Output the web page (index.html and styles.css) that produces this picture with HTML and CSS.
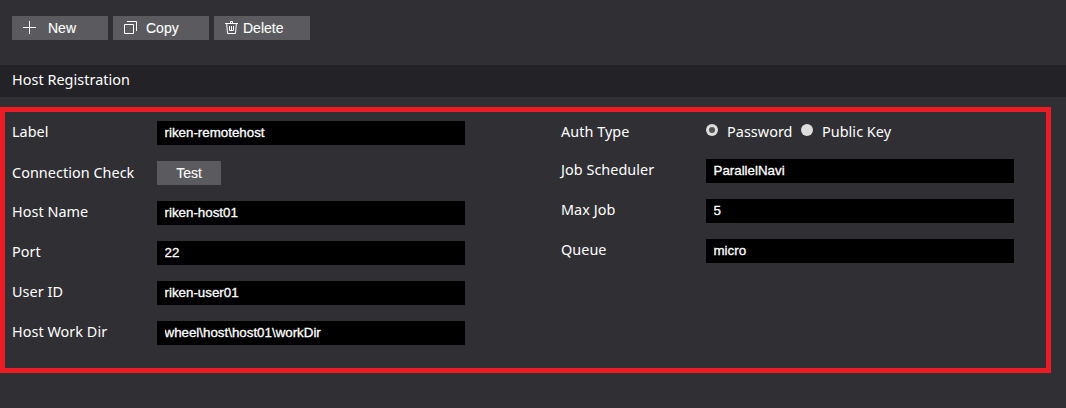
FILE: index.html
```html
<!DOCTYPE html>
<html lang="en">
<head>
<meta charset="utf-8">
<title>Host Registration</title>
<link rel="stylesheet" href="styles.css">
</head>
<body>
<nav class="toolbar">
  <button class="btn"><svg class="icon" viewBox="0 0 16 16"><path d="M7.500 1v13M1 7.500h13"/></svg><span class="btn-new">New</span></button>
  <button class="btn"><svg class="icon" viewBox="0 0 16 16"><path d="M1.500 4.500h9v9h-9zM4 1.500h9.500V11"/></svg><span class="btn-copy">Copy</span></button>
  <button class="btn"><svg class="icon" viewBox="0 0 16 16"><path d="M1 3.500h13M6.500 3V1.500h2V3M2.700 4l.8 9.500h8l.8-9.500M5.500 6v4.500h4V6M7.500 6v4"/></svg><span class="btn-delete">Delete</span></button>
</nav>
<h1 class="title">Host Registration</h1>
<form class="panel">
  <div class="column">
    <div class="row"><label>Label</label><input type="text" value="riken-remotehost"></div>
    <div class="row row-test"><label>Connection Check</label><button type="button" class="btn test">Test</button></div>
    <div class="row"><label>Host Name</label><input type="text" value="riken-host01"></div>
    <div class="row"><label>Port</label><input type="text" value="22"></div>
    <div class="row"><label>User ID</label><input type="text" value="riken-user01"></div>
    <div class="row"><label>Host Work Dir</label><input type="text" value="wheel\host\host01\workDir"></div>
  </div>
  <div class="column right">
    <div class="row auth"><label>Auth Type</label>
      <span class="radio checked"></span><span class="option password">Password</span>
      <span class="radio"></span><span class="option">Public Key</span></div>
    <div class="row"><label>Job Scheduler</label><input type="text" value="ParallelNavi"></div>
    <div class="row"><label>Max Job</label><input type="text" value="5"></div>
    <div class="row"><label>Queue</label><input type="text" value="micro"></div>
  </div>
</form>
</body>
</html>
```
FILE: styles.css
```css
* { box-sizing: border-box; }
body {
  margin: 0;
  height: 408px;
  overflow: hidden;
  background: #302f34;
  color: #fff;
  font: 14.4px/24px "Noto Sans", sans-serif;
  letter-spacing: 0.05px;
}
.toolbar { display: flex; gap: 5px; padding: 16px 12px 25px; }
.btn {
  display: flex;
  align-items: center;
  width: 96px;
  height: 24px;
  padding: 0 10px;
  border: 0;
  background: #5b5a5f;
  color: #fff;
  font: 14px/24px "Liberation Sans", Arial, sans-serif;
  -webkit-text-stroke: 0.1px #fff;
}
.icon { width: 16px; height: 16px; flex: none; fill: none; stroke: #fff; stroke-width: 1; }
.btn-new { margin-left: 10px; }
.btn-copy { margin-left: 7px; }
.btn-delete { margin-left: 3px; }
.title {
  margin: 0 0 10px;
  height: 32px;
  padding-left: 12px;
  background: #232227;
  font-size: 14.4px;
  font-weight: 400;
  line-height: 30px;
}
.panel {
  display: flex;
  width: 1051px;
  height: 266px;
  padding: 9px 0 0 7px;
  border: 5px solid #ed1c24;
}
.column { display: flex; flex-direction: column; gap: 16px; width: 549px; }
.right { width: 460px; }
.row { display: flex; height: 24px; }
.row label { width: 145px; line-height: 22px; }
.row-test label { line-height: 24px; }
.row input {
  width: 308px;
  height: 24px;
  padding: 0 8px 1px 7.5px;
  border: 0;
  background: #000;
  color: #fff;
  font: 13.333px "Liberation Sans", Arial, sans-serif;
  -webkit-text-stroke: 0.3px #fff;
}
.test { width: 64px; justify-content: center; }
.auth { height: 22px; }
.radio {
  display: flex;
  align-items: center;
  justify-content: center;
  width: 12px;
  height: 12px;
  margin-top: 3px;
  border-radius: 50%;
  background: #ddd;
}
.radio.checked::after {
  content: "";
  width: 6px;
  height: 6px;
  border-radius: 50%;
  background: #555;
}
.option { margin-left: 9px; line-height: 22px; }
.password { width: 74px; }
```
